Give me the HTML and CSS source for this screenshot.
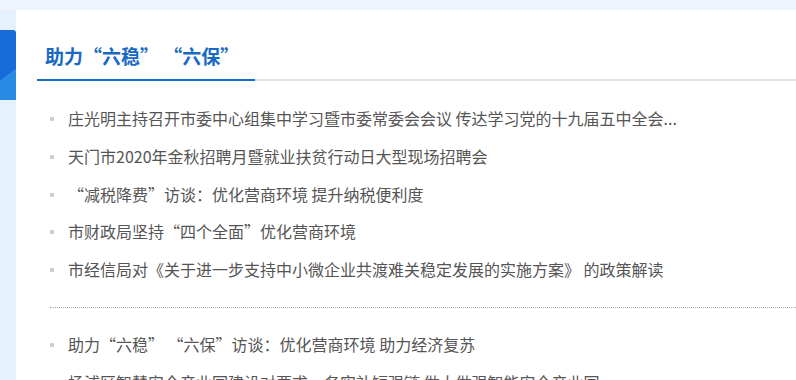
FILE: index.html
```html
<!DOCTYPE html>
<html lang="zh-CN">
<head>
<meta charset="utf-8">
<link rel="stylesheet" href="styles.css">
</head>
<body>
<div class="topband"></div>
<div class="main">
  <aside class="side"><div class="tab"></div></aside>
  <section class="panel">
    <div class="head"><h2 class="title">助力“六稳” “六保”</h2></div>
    <ul class="list">
      <li>庄光明主持召开市委中心组集中学习暨市委常委会会议 传达学习党的十九届五中全会...</li>
      <li>天门市2020年金秋招聘月暨就业扶贫行动日大型现场招聘会</li>
      <li>“减税降费”访谈：优化营商环境 提升纳税便利度</li>
      <li>市财政局坚持“四个全面”优化营商环境</li>
      <li>市经信局对《关于进一步支持中小微企业共渡难关稳定发展的实施方案》 的政策解读</li>
    </ul>
    <ul class="list list2">
      <li>助力“六稳” “六保”访谈：优化营商环境 助力经济复苏</li>
      <li>杨浦区智慧安全产业园建设对要求，务实补短强链 做大做强智能安全产业园</li>
    </ul>
  </section>
</div>
</body>
</html>
```
FILE: styles.css
```css
html, body {
  margin: 0;
  padding: 0;
}
body {
  width: 796px;
  height: 380px;
  overflow: hidden;
  background: #eef5fd;
  font-family: "Noto Sans CJK SC", "Noto Sans", sans-serif;
}
.topband {
  height: 10px;
  background: #eef5fd;
}
.main {
  display: flex;
  height: 370px;
}
.side {
  width: 16px;
  flex: none;
  background: #e6f1fe;
  padding-top: 20px;
}
.tab {
  height: 70px;
  border-top-right-radius: 3px;
  background: linear-gradient(-37deg, #2a8be4 0, #2a8be4 38%, #176bda 38%, #176bda 100%);
}
.panel {
  flex: 1;
  background: #ffffff;
  padding-left: 21px;
  overflow: hidden;
}
.head {
  padding-top: 34px;
  border-bottom: 2px solid #e4e4e4;
  height: 35px;
  display: flex;
  align-items: flex-end;
}
.title {
  margin: 0 0 -2px 0;
  padding: 0 16px 11px 8px;
  font-size: 19px;
  line-height: 24px;
  font-weight: bold;
  color: #1769c3;
  border-bottom: 2px solid #1470cc;
  white-space: nowrap;
}
.list {
  list-style: none;
  margin: 0 0 0 13px;
  padding: 19px 0 18px 0;
  border-bottom: 1px dotted #a8a8a8;
}
.list2 {
  border-bottom: none;
  padding-top: 18px;
}
.list li {
  position: relative;
  padding-left: 18px;
  height: 37.75px;
  line-height: 37.75px;
  font-size: 16px;
  color: #555555;
  white-space: nowrap;
}
.list li::before {
  content: "";
  position: absolute;
  left: 0;
  top: 17px;
  width: 4px;
  height: 4px;
  border-radius: 1px;
  background: #cccccc;
}
```
